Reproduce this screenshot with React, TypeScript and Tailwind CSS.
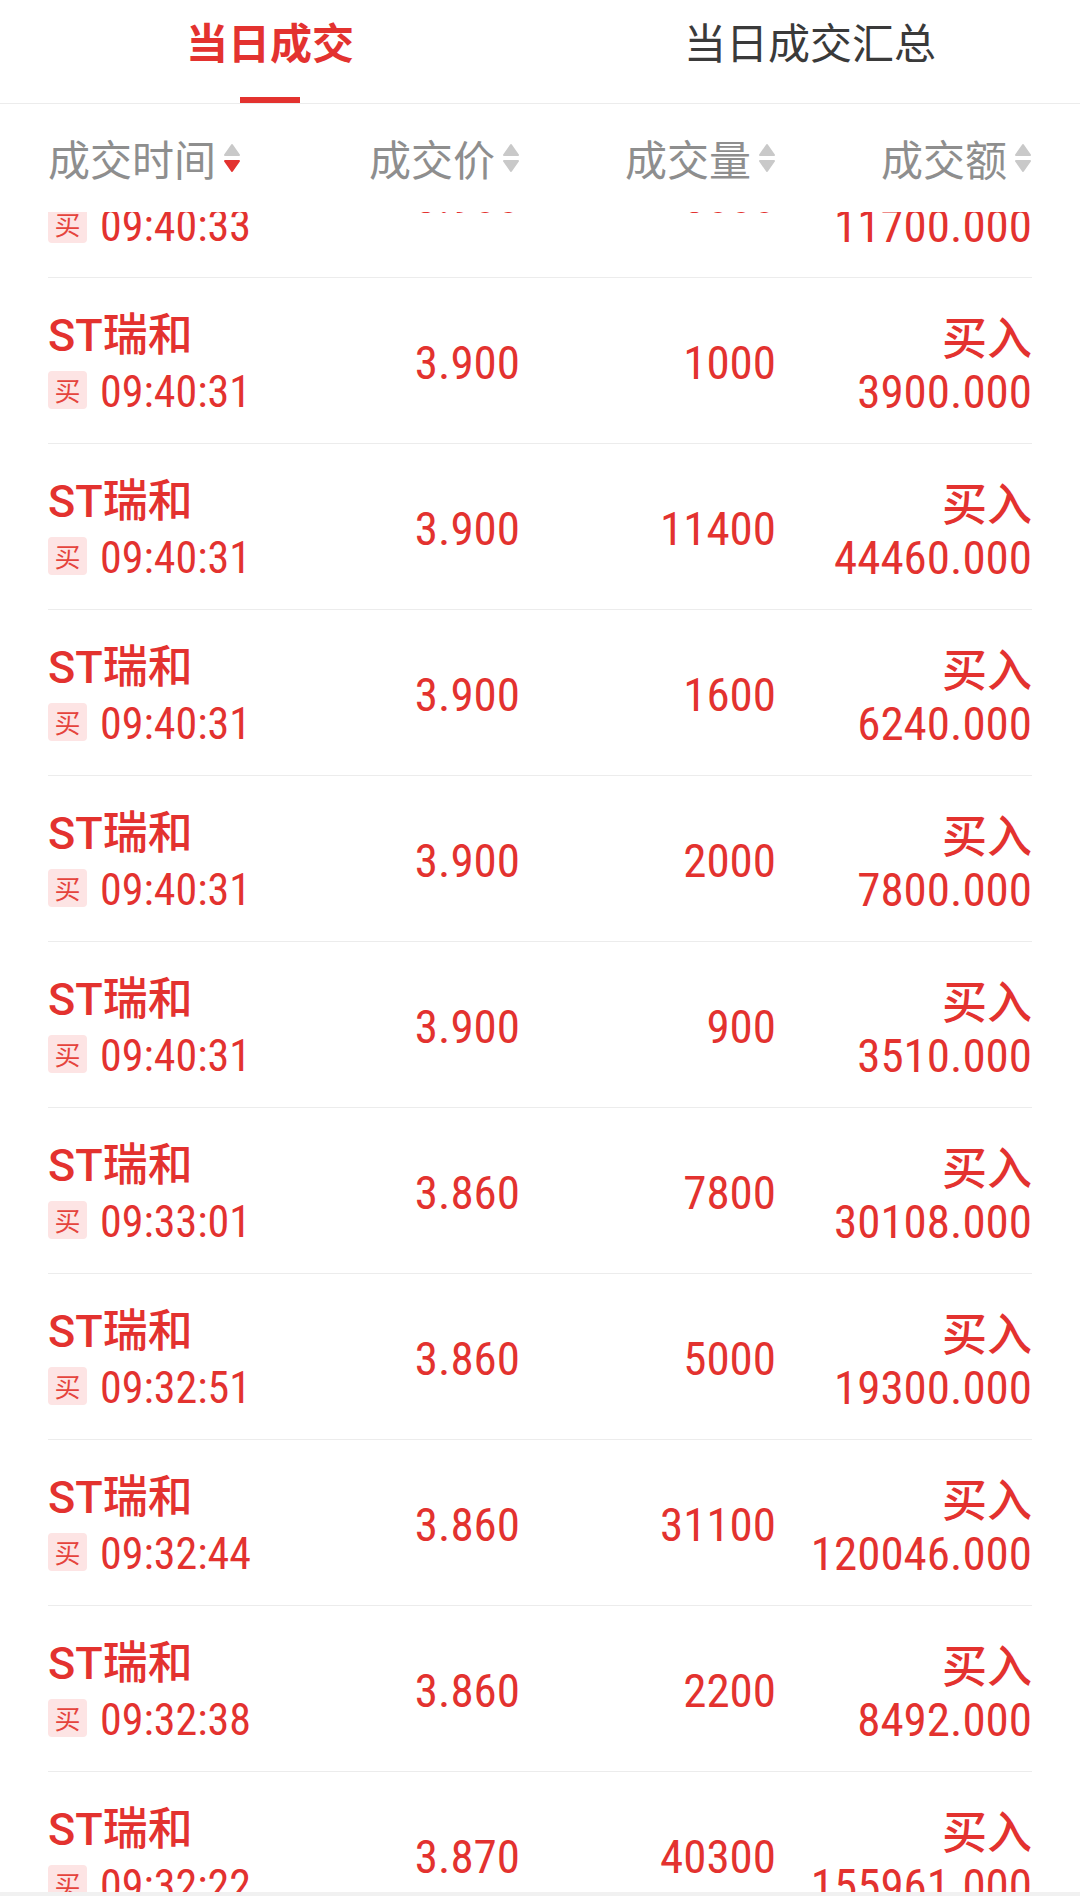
import React from 'react';

type Trade = { time: string; price: string; vol: string; amount: string };

const trades: Trade[] = [
  { time: '09:40:33', price: '3.900', vol: '3000', amount: '11700.000' },
  { time: '09:40:31', price: '3.900', vol: '1000', amount: '3900.000' },
  { time: '09:40:31', price: '3.900', vol: '11400', amount: '44460.000' },
  { time: '09:40:31', price: '3.900', vol: '1600', amount: '6240.000' },
  { time: '09:40:31', price: '3.900', vol: '2000', amount: '7800.000' },
  { time: '09:40:31', price: '3.900', vol: '900', amount: '3510.000' },
  { time: '09:33:01', price: '3.860', vol: '7800', amount: '30108.000' },
  { time: '09:32:51', price: '3.860', vol: '5000', amount: '19300.000' },
  { time: '09:32:44', price: '3.860', vol: '31100', amount: '120046.000' },
  { time: '09:32:38', price: '3.860', vol: '2200', amount: '8492.000' },
  { time: '09:32:22', price: '3.870', vol: '40300', amount: '155961.000' },
];

const NUM = "font-['Roboto_Condensed','Roboto',sans-serif] font-normal";

function SortIcon({ down }: { down?: boolean }) {
  return (
    <svg width="18" height="30" viewBox="0 0 18 30" className="ml-[7px] shrink-0">
      <path d="M9 2 L16 12 H2 Z" fill="#c9c9c9" stroke="#c9c9c9" strokeWidth="2" strokeLinejoin="round" />
      <path d="M2 18 H16 L9 28 Z" fill={down ? '#e3322f' : '#c9c9c9'} stroke={down ? '#e3322f' : '#c9c9c9'} strokeWidth="2" strokeLinejoin="round" />
    </svg>
  );
}

function Row({ t }: { t: Trade }) {
  return (
    <div className="grid grid-cols-[216px_256px_256px_256px] h-[166px] border-b border-[#ececec] text-[#e3322f]">
      {/* name + time */}
      <div className="flex flex-col justify-center">
        <div className="text-[45px] leading-[46px] font-medium font-['Roboto','Noto_Sans_CJK_SC',sans-serif] whitespace-nowrap">
          ST瑞和
        </div>
        <div className="mt-[12px] h-[38px] flex items-center gap-[13px]">
          <span className="w-[39px] h-[38px] shrink-0 rounded-[4px] bg-[#fde4e4] flex items-center justify-center text-[26px] leading-none text-[#e5443d] font-['Noto_Sans_CJK_SC',sans-serif]">
            买
          </span>
          <span className={`${NUM} text-[44px] leading-[38px] pt-[4px] whitespace-nowrap`}>{t.time}</span>
        </div>
      </div>

      <div className={`${NUM} flex items-center justify-end pt-[6px] text-[47px]`}>{t.price}</div>
      <div className={`${NUM} flex items-center justify-end pt-[6px] text-[47px]`}>{t.vol}</div>

      {/* side + amount */}
      <div className="flex flex-col justify-center items-end">
        <div className="text-[45px] leading-[46px] font-medium font-['Noto_Sans_CJK_SC',sans-serif]">买入</div>
        <div className={`${NUM} mt-[12px] h-[38px] leading-[38px] pt-[2px] text-[47px] whitespace-nowrap`}>
          {t.amount}
        </div>
      </div>
    </div>
  );
}

export default function App() {
  return (
    <div className="w-[1080px] h-[1896px] bg-white flex flex-col overflow-hidden font-['Roboto','Noto_Sans_CJK_SC',sans-serif]">
      {/* Tabs */}
      <div className="h-[104px] shrink-0 flex border-b border-[#ececec]">
        <div className="flex-1 flex flex-col items-center">
          <div className="mt-[14px] text-[42px] leading-[54px] font-bold text-[#e3322f] font-['Noto_Sans_CJK_SC',sans-serif]">
            当日成交
          </div>
          <div className="mt-auto w-[60px] h-[6px] bg-[#e3322f]" />
        </div>
        <div className="flex-1 flex flex-col items-center">
          <div className="mt-[14px] text-[42px] leading-[54px] text-[#3a3a3a] font-['Noto_Sans_CJK_SC',sans-serif]">
            当日成交汇总
          </div>
        </div>
      </div>

      {/* Column header */}
      <div className="h-[108px] shrink-0 px-[48px] grid grid-cols-[216px_256px_256px_256px] text-[42px] leading-none text-[#8e8e8e] font-['Noto_Sans_CJK_SC',sans-serif]">
        <div className="flex items-center">
          成交时间
          <SortIcon down />
        </div>
        <div className="flex items-center justify-end">
          成交价
          <SortIcon />
        </div>
        <div className="flex items-center justify-end">
          成交量
          <SortIcon />
        </div>
        <div className="flex items-center justify-end">
          成交额
          <SortIcon />
        </div>
      </div>

      {/* List */}
      <div className="flex-1 overflow-hidden px-[48px]">
        <div className="mt-[-100px]">
          {trades.map((t, i) => (
            <Row key={i} t={t} />
          ))}
        </div>
      </div>

      <div className="h-[4px] shrink-0 bg-[#f1f1f1]" />
    </div>
  );
}
